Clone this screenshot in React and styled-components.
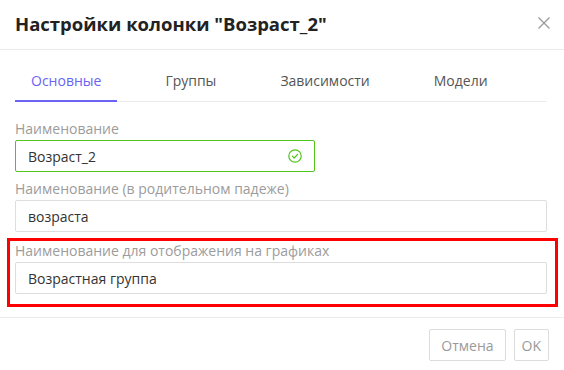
import React, { useState } from 'react'
import styled, { createGlobalStyle } from 'styled-components'

const GlobalStyle = createGlobalStyle`
  body {
    margin: 0;
    background: #fff;
    font-family: "Open Sans", "Noto Sans", sans-serif;
  }
`

const Modal = styled.div`
  width: 564px;
  height: 370px;
  background: #fff;
  display: flex;
  flex-direction: column;
`

const Header = styled.div`
  height: 50px;
  border-bottom: 1px solid #ececec;
  display: flex;
  align-items: center;
  justify-content: space-between;
  padding: 0 14px 0 15px;
  box-sizing: border-box;
`

const Title = styled.h1`
  margin: 0;
  font-size: 18.5px;
  font-weight: 700;
  color: #222;
  line-height: 28px;
  padding-bottom: 2px;
`

const Close = styled.button`
  border: none;
  background: none;
  padding: 0;
  width: 12px;
  height: 12px;
  display: flex;
  cursor: pointer;
  margin-bottom: 3px;
`

const Body = styled.div`
  padding: 12px 17px 23px 15px;
  border-bottom: 1px solid #ececec;
`

const TabList = styled.div`
  display: flex;
  gap: 32px;
  box-shadow: inset 0 -1px 0 #ececec;
`

const Tab = styled.div`
  padding: 9px 16px;
  line-height: 20px;
  font-size: 14px;
  color: ${p => (p.$active ? '#6b63f4' : '#555')};
  border-bottom: 2px solid ${p => (p.$active ? '#6b63f4' : 'transparent')};
  cursor: pointer;
`

const Form = styled.div`
  margin-top: 17px;
  display: flex;
  flex-direction: column;
  gap: 7px;
`

const Field = styled.div`
  position: relative;
  display: flex;
  flex-direction: column;
  gap: 1px;
  width: ${p => p.$width || '100%'};
  margin-top: ${p => (p.$marked ? '2px' : '0')};

  ${p =>
    p.$marked &&
    `
    &::after {
      content: '';
      position: absolute;
      left: -8px;
      right: -11px;
      top: -3px;
      bottom: -13px;
      border: 3px solid #ff0000;
      pointer-events: none;
    }
  `}
`

const Label = styled.label`
  font-size: 14px;
  line-height: 20px;
  color: #9c9c9c;
`

const InputBox = styled.div`
  height: 32px;
  box-sizing: border-box;
  border: 1px solid ${p => (p.$valid ? '#52c41a' : '#dedede')};
  border-radius: 2px;
  display: flex;
  align-items: center;
  padding: 0 12px;
`

const Input = styled.input`
  flex: 1;
  border: none;
  outline: none;
  padding: 0;
  font-family: inherit;
  font-size: 14px;
  color: #333;
  background: transparent;
`

const Footer = styled.div`
  display: flex;
  justify-content: flex-end;
  gap: 8px;
  padding: 11px 15px 0 0;
`

const Button = styled.button`
  height: 32px;
  padding: 0 ${p => (p.$narrow ? '7px' : '11px')};
  border: 1px solid #dcdcdc;
  border-radius: 2px;
  background: #fff;
  color: #9a9a9a;
  font-family: inherit;
  font-size: 14px;
  cursor: pointer;
`

const CheckIcon = () => (
  <svg width="14" height="14" viewBox="0 0 14 14" fill="none">
    <circle cx="7" cy="7" r="6.2" stroke="#52c41a" strokeWidth="1.2" />
    <path d="M4.4 7.2 L6.2 9 L9.6 5.4" stroke="#52c41a" strokeWidth="1.2" strokeLinecap="round" strokeLinejoin="round" />
  </svg>
)

const tabs = ['Основные', 'Группы', 'Зависимости', 'Модели']

const App = () => {
  const [active, setActive] = useState(0)
  const [name, setName] = useState('Возраст_2')
  const [genitive, setGenitive] = useState('возраста')
  const [chartName, setChartName] = useState('Возрастная группа')

  return (
    <Modal>
      <GlobalStyle />
      <Header>
        <Title>Настройки колонки "Возраст_2"</Title>
        <Close aria-label="close">
          <svg width="12" height="12" viewBox="0 0 12 12">
            <path d="M0.5 0.5 L11.5 11.5 M11.5 0.5 L0.5 11.5" stroke="#999" strokeWidth="1.3" />
          </svg>
        </Close>
      </Header>
      <Body>
        <TabList>
          {tabs.map((t, i) => (
            <Tab key={t} $active={i === active} onClick={() => setActive(i)}>
              {t}
            </Tab>
          ))}
        </TabList>
        <Form>
          <Field $width="300px">
            <Label>Наименование</Label>
            <InputBox $valid>
              <Input value={name} onChange={e => setName(e.target.value)} />
              <CheckIcon />
            </InputBox>
          </Field>
          <Field>
            <Label>Наименование (в родительном падеже)</Label>
            <InputBox>
              <Input value={genitive} onChange={e => setGenitive(e.target.value)} />
            </InputBox>
          </Field>
          <Field $marked>
            <Label>Наименование для отображения на графиках</Label>
            <InputBox>
              <Input value={chartName} onChange={e => setChartName(e.target.value)} />
            </InputBox>
          </Field>
        </Form>
      </Body>
      <Footer>
        <Button>Отмена</Button>
        <Button $narrow>OK</Button>
      </Footer>
    </Modal>
  )
}

export default App
